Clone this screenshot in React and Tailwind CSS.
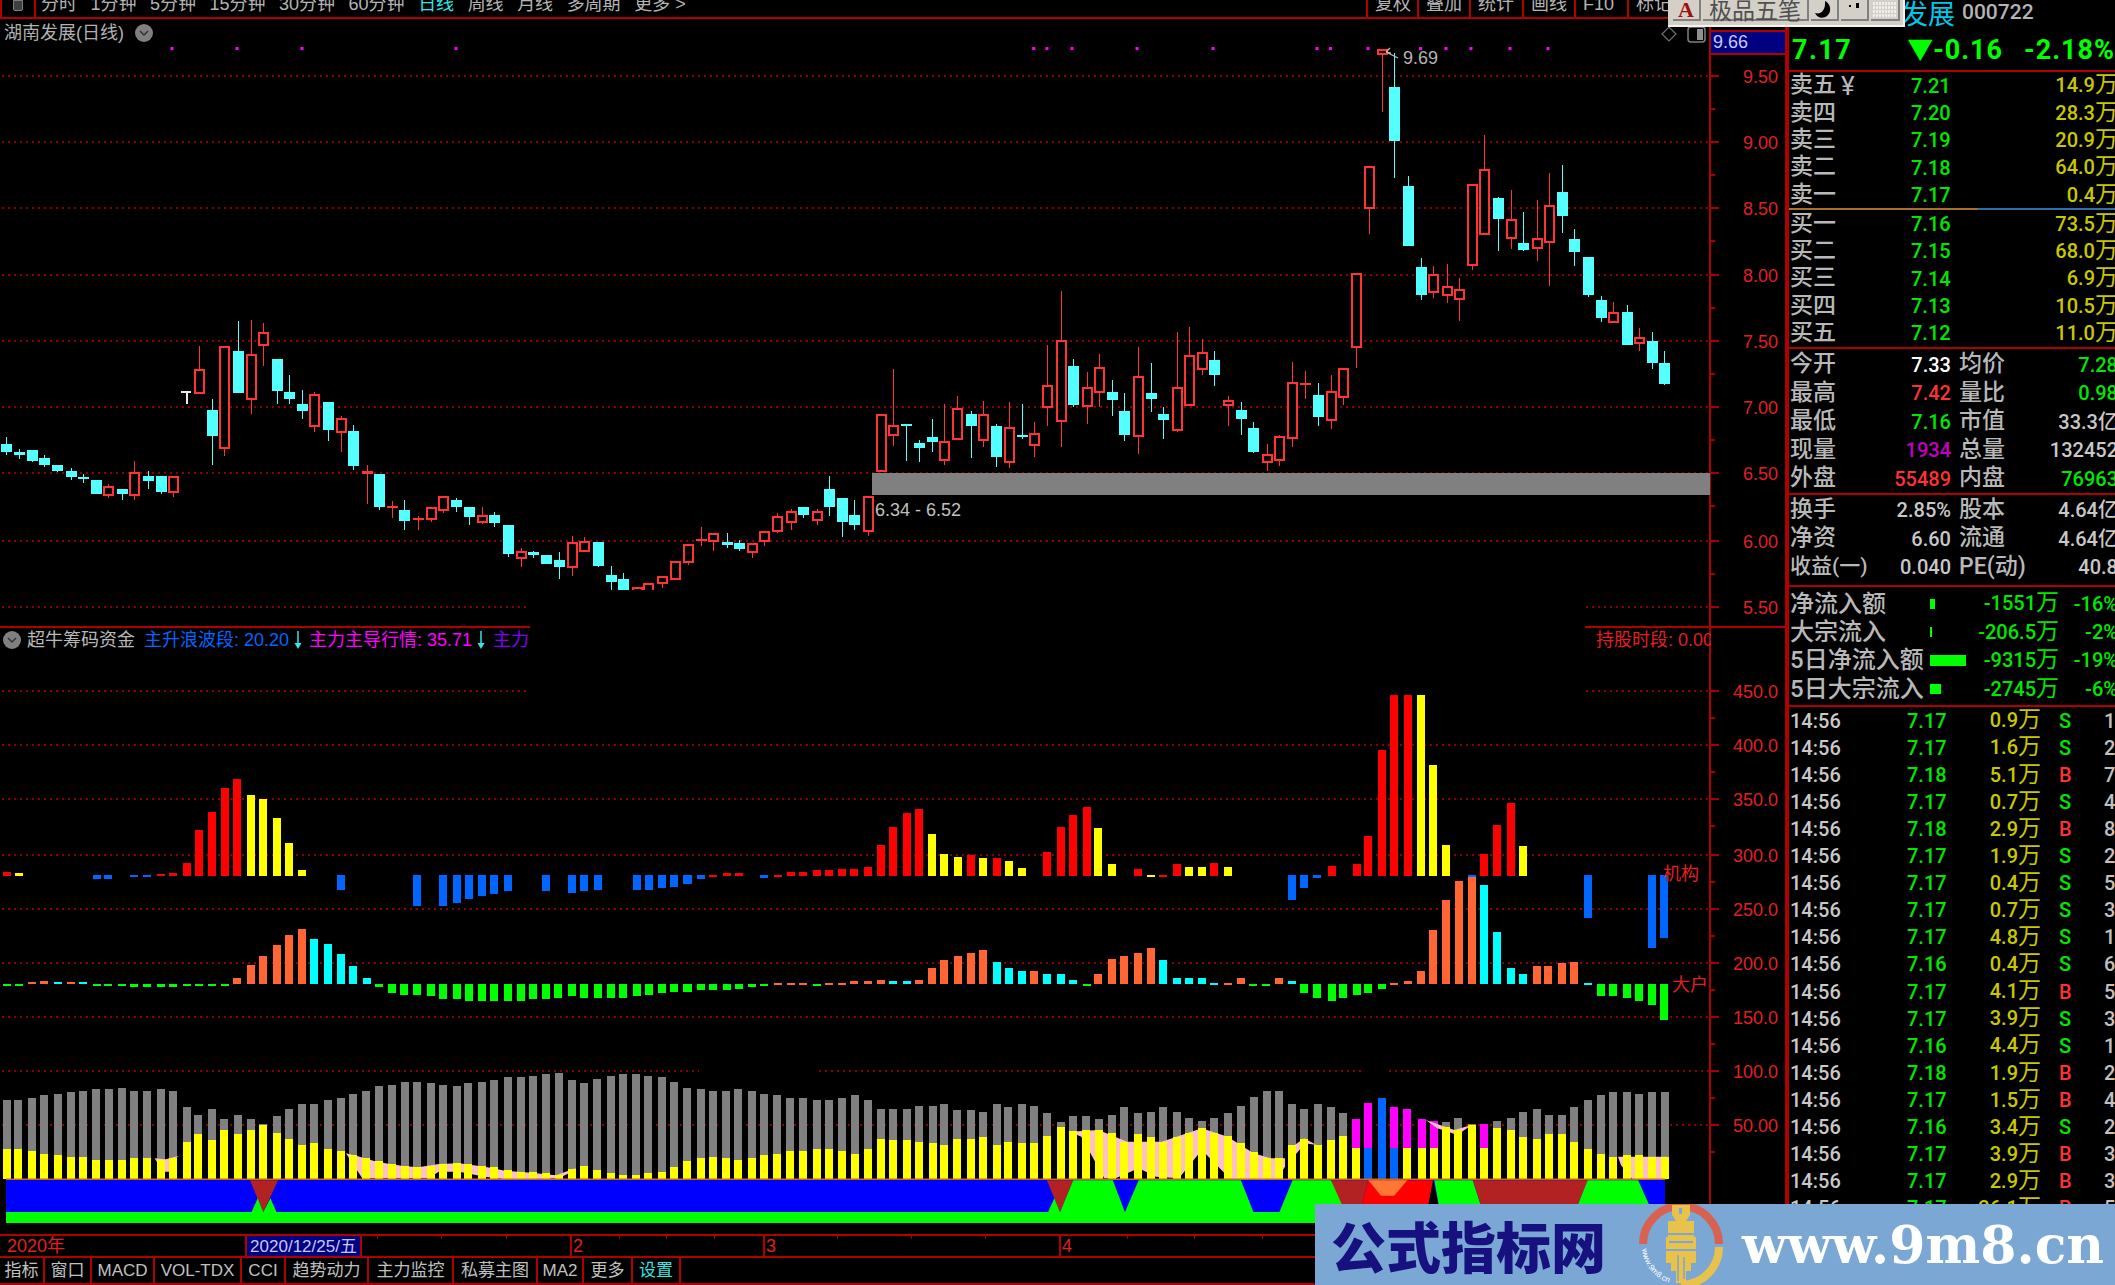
import React from "react";

const RED = "#ff3333", CY = "#54ffff";
const COL = { r: "#ff0000", y: "#ffff00", b: "#0066ff", o: "#ff6633", c: "#00ffff", g: "#00ff00", m: "#ff00ff", a: "#808080" };

const z9 = [[11,433,455,410,464,"c"],[33,456,464,446,478,"c"],[56,451,482,451,485,"c"],[77,473,495,464,500,"c"],[100,496,513,496,517,"c"],[124,514,531,505,540,"c"],[145,531,536,522,550,"c"],[168,541,581,541,581,"c"],[189,560,584,553,595,"r"],[213,568,581,568,599,"c"],[234,519,584,482,599,"r"],[257,528,544,514,568,"c"],[280,528,577,528,582,"c"],[302,532,575,532,590,"r"],[346,209,278,139,278,"r"],[370,329,409,297,495,"c"],[391,141,445,141,468,"r"],[414,154,279,64,279,"c"],[437,164,296,59,342,"r"],[458,100,134,68,198,"r"],[482,176,274,176,311,"c"],[503,275,297,225,311,"c"],[526,311,333,270,356,"c"],[547,285,377,275,397,"r"],[571,307,391,307,423,"c"],[594,357,395,347,455,"r"],[615,392,499,374,509,"c"],[639,514,522,496,612,"d"],[660,523,622,523,631,"c"],[683,617,625,603,653,"d"],[704,631,662,599,689,"c"],[728,653,661,648,689,"d"],[751,623,656,623,667,"r"],[772,591,629,591,640,"r"],[795,599,622,595,635,"c"],[817,622,652,622,676,"c"],[840,649,666,622,671,"r"],[861,644,670,635,680,"c"],[885,676,761,676,770,"c"],[908,757,774,743,801,"r"],[929,757,765,752,775,"c"],[952,766,793,766,793,"c"],[973,779,802,757,837,"c"],[997,730,800,708,829,"r"],[1018,726,752,712,757,"r"],[1041,725,797,725,802,"c"],[1065,824,847,797,869,"c"],[1086,838,870,820,870,"c"],[1109,865,872,865,870,"r"],[1129,853,872,848,870,"r"],[1154,830,850,830,864,"r"],[1175,785,836,785,836,"r"],[1198,735,787,735,796,"r"],[1222,716,724,681,739,"d"],[1242,703,724,698,752,"r"],[1266,725,734,698,743,"c"],[1287,730,748,721,752,"c"],[1310,731,755,731,775,"r"],[1331,695,724,695,739,"r"],[1354,650,692,640,698,"r"],[1378,636,665,627,689,"r"],[1399,622,644,622,653,"c"],[1423,636,661,627,676,"r"],[1444,568,622,527,649,"c"],[1467,595,667,595,712,"c"],[1488,644,676,599,690,"c"],[1512,591,693,591,708,"r"],[1535,344,513,344,513,"r"],[1556,379,404,207,437,"r"]];
const z10 = [[98,1181,1188,1181,1292,"c"],[120,1239,1255,1230,1297,"c"],[143,1221,1237,1167,1265,"c"],[164,1235,1290,1121,1305,"r"],[187,1136,1227,1099,1227,"r"],[211,1153,1188,1144,1283,"c"],[232,1154,1231,1112,1250,"r"],[255,1188,1282,1183,1310,"c"],[277,1195,1295,1117,1313,"r"],[299,1216,1220,1122,1228,"c"],[321,1213,1245,1175,1282,"r"],[344,1069,1132,946,1188,"r"],[367,934,1173,784,1250,"r"],[389,1009,1126,986,1130,"c"],[412,1073,1128,1027,1183,"r"],[434,1014,1087,972,1130,"r"],[457,1085,1111,1049,1157,"c"],[478,1144,1215,1090,1233,"c"],[501,1041,1219,950,1273,"r"],[524,1090,1107,1000,1147,"c"],[546,1153,1170,1131,1228,"c"],[569,1073,1200,905,1205,"r"],[590,978,1124,892,1124,"r"],[613,969,1016,928,1034,"r"],[634,991,1036,964,1067,"c"],[658,1114,1124,1098,1188,"r"],[681,1140,1166,1117,1215,"c"],[702,1194,1265,1175,1270,"c"],[726,1275,1295,1243,1322,"r"],[747,1221,1290,1216,1308,"r"],[770,1060,1223,996,1252,"r"],[792,1059,1066,1022,1107,"d"],[815,1094,1161,1058,1188,"c"],[838,1086,1169,1036,1197,"r"],[859,1018,1101,1013,1126,"r"],[882,731,952,731,1014,"r"],[904,411,533,411,612,"r"],[927,60,72,60,247,"r"],[948,172,332,70,445,"c"],[972,469,648,437,648,"c"],[995,712,796,685,809,"c"],[1016,736,785,707,805,"r"],[1040,771,795,703,819,"r"],[1061,780,808,744,873,"r"],[1083,465,705,465,719,"r"],[1105,420,611,316,611,"r"],[1129,505,566,500,662,"c"],[1152,569,624,481,656,"r"],[1173,640,661,545,664,"c"],[1196,627,655,509,692,"r"],[1217,528,637,428,769,"r"],[1241,487,557,405,608,"c"],[1262,626,666,598,707,"c"],[1285,680,796,680,800,"c"],[1309,811,864,797,877,"c"],[1330,848,877,815,877,"r"],[1353,847,945,824,945,"c"],[1375,925,939,895,962,"r"],[1397,932,999,905,1017,"c"],[1418,1000,1062,964,1066,"c"]];
const candles = [
  ...z9.map(([x, t, b, wt, wb, c]) => [x / 1.742, 300 + t / 3, 300 + b / 3, 300 + wt / 3, 300 + wb / 3, c]),
  ...z10.map(([x, t, b, wt, wb, c]) => [850 + x / 1.742, 30 + t / 3, 30 + b / 3, 30 + wt / 3, 30 + wb / 3, c]),
];

const t7 = [[15,"r",755],[42,"y",760],[217,"b",778],[243,"b",778],[300,"b",769],[330,"b",769],[361,"r",763],[388,"r",760],[418,"r",729],[445,"r",629],[475,"r",575],[503,"r",503],[532,"r",476],[562,"y",526],[589,"y",538],[620,"y",593],[647,"y",670],[677,"y",751],[764,"b",809],[935,"b",858],[992,"b",858],[1023,"b",849],[1050,"b",836],[1080,"b",827],[1107,"b",823],[1137,"b",814],[1224,"b",814],[1281,"b",818],[1308,"b",814],[1339,"b",809],[1426,"b",809],[1453,"b",809],[1483,"b",805],[1510,"b",800],[1540,"b",791]];
const t11 = [[63,"b",298],[99,"r",284],[140,"r",280],[176,"r",280],[252,"b",293],[293,"r",285],[333,"r",276],[370,"r",276],[410,"r",271],[446,"r",271],[487,"r",266],[522,"r",266],[563,"r",262],[603,"r",194],[639,"r",140],[680,"r",99],[716,"r",86],[757,"y",163],[792,"y",221],[833,"y",230],[874,"r",225],[909,"y",235],[950,"r",235],[986,"y",244]];
const t8 = [[43,"y",745],[93,"r",697],[120,"r",620],[143,"r",584],[170,"r",562],[193,"y",625],[220,"y",733],[270,"r",746],[296,"y",764],[320,"r",764],[346,"r",733],[370,"y",742],[396,"y",742],[420,"r",729],[446,"y",742],[572,"b",840],[596,"b",804],[622,"b",773],[650,"r",738],[699,"r",733],[722,"r",648],[749,"r",391],[772,"r",226],[799,"r",226],[825,"y",226],[849,"y",436],[875,"y",675],[925,"b",773],[949,"r",702],[975,"r",616],[1001,"r",549],[1025,"y",679],[1152,"b",894],[1278,"b",985],[1302,"b",953]];
const l7 = [[15,"g",1097],[42,"g",1094],[72,"o",1087],[99,"o",1084],[129,"c",1087],[159,"o",1087],[187,"c",1087],[217,"g",1097],[243,"g",1097],[273,"g",1097],[300,"g",1102],[330,"g",1102],[361,"g",1102],[388,"g",1102],[418,"g",1097],[445,"g",1097],[475,"g",1097],[503,"g",1097],[532,"o",1075],[562,"o",1034],[589,"o",1007],[620,"o",976],[647,"o",944],[677,"o",926],[704,"c",958],[734,"c",971],[764,"c",1003],[791,"c",1039],[821,"c",1075],[848,"g",1102],[878,"g",1120],[905,"g",1125],[935,"g",1125],[965,"g",1129],[992,"g",1138],[1023,"g",1138],[1050,"g",1142],[1080,"g",1142],[1107,"g",1142],[1137,"g",1142],[1167,"g",1142],[1194,"g",1138],[1224,"g",1138],[1251,"g",1133],[1281,"g",1129],[1308,"g",1133],[1339,"g",1133],[1368,"g",1133],[1396,"g",1133],[1426,"g",1129],[1453,"g",1125],[1483,"g",1120],[1510,"g",1115],[1540,"g",1115]];
const l11 = [[23,"g",635],[63,"g",631],[99,"g",631],[140,"g",631],[176,"g",627],[216,"g",622],[252,"g",617],[293,"o",608],[333,"o",608],[370,"o",608],[410,"g",617],[446,"o",608],[487,"o",608],[522,"o",604],[563,"o",604],[603,"o",599],[639,"c",604],[680,"c",604],[716,"o",599],[757,"o",563],[792,"o",541],[833,"o",527],[874,"o",518],[909,"o",509],[950,"c",545],[986,"c",563]];
const l8 = [[43,"c",1052],[67,"o",1052],[93,"c",1061],[120,"c",1061],[143,"c",1079],[170,"g",1097],[193,"o",1061],[220,"o",1016],[243,"o",1007],[270,"o",998],[296,"o",985],[320,"c",1021],[346,"c",1075],[370,"c",1075],[396,"c",1075],[420,"c",1089],[446,"o",1089],[472,"o",1075],[496,"g",1097],[522,"g",1097],[546,"o",1075],[572,"c",1084],[596,"g",1120],[622,"g",1133],[650,"g",1142],[672,"g",1133],[699,"g",1124],[722,"g",1120],[749,"g",1106],[772,"o",1089],[799,"o",1084],[825,"o",1052],[849,"o",931],[875,"o",841],[899,"o",782],[925,"o",772],[949,"c",796],[975,"c",935],[1001,"c",1043],[1025,"c",1061],[1052,"o",1039],[1075,"o",1039],[1101,"o",1030],[1125,"o",1025],[1152,"c",1089],[1178,"g",1129],[1202,"g",1129],[1228,"g",1133],[1252,"g",1142],[1278,"g",1156],[1302,"g",1200]];

const histoTop = [
  ...t7.map(([x, c, e]) => [x / 2.24, c, 620 + e / 3]),
  ...[[23, "b", 311]].map(([x, c, e]) => [680 + x / 3, c, 780 + e / 3]),
  ...t11.map(([x, c, e]) => [680 + x / 3, c, 780 + e / 3]),
  ...t8.map(([x, c, e]) => [1000 + x / 1.96, c, 620 + e / 3]),
];
const histoLow = [
  ...l7.map(([x, c, e]) => [x / 2.24, c, 620 + e / 3]),
  ...l11.map(([x, c, e]) => [680 + x / 3, c, 780 + e / 3]),
  ...l8.map(([x, c, e]) => [1000 + x / 1.96, c, 620 + e / 3]),
];

const v4 = [[13,150,298],[36,150,298],[63,145,302],[87,136,311],[113,132,316],[139,127,320],[163,123,320],[189,118,329],[213,118,329],[239,114,329],[263,123,325],[289,123,325],[316,118,329],[339,123,325],[366,172,276],[389,195,253],[416,177,271],[439,208,239],[466,195,253],[492,208,239],[516,222,226],[542,199,249],[566,177,266],[592,163,285],[615,163,280],[642,150,298],[668,145,302],[692,132,316],[718,123,325],[743,109,334],[768,105,343],[793,96,348],[818,96,352],[845,100,348],[868,105,343],[895,109,339],[918,100,343],[945,96,348],[968,91,352],[995,82,361],[1021,82,366],[1045,78,366],[1071,73,370],[1095,69,375],[1121,91,357],[1144,100,348],[1171,87,361],[1197,78,370],[1221,73,375],[1247,73,375],[1271,78,370],[1297,82,366],[1321,96,352],[1347,114,334],[1373,118,325],[1397,123,320],[1423,123,325],[1447,118,329],[1474,123,325],[1497,132,316],[1523,136,311],[1549,145,302]];
const v5 = [[5,145,302],[29,150,298],[50,150,298],[73,145,302],[95,136,311],[118,150,298],[141,177,266],[162,177,271],[186,177,271],[207,167,275],[231,167,280],[251,163,285],[274,181,266],[298,181,266],[319,185,262],[343,163,285],[363,172,275],[387,163,280],[408,167,280],[431,190,257],[455,217,230],[476,199,244],[498,199,240],[520,208,240],[544,195,248],[565,172,275],[588,190,253],[611,185,262],[632,172,275],[656,185,262],[677,204,248],[700,213,235],[722,204,248],[745,190,257],[768,167,280],[790,140,307],[813,123,325],[834,123,325],[857,163,285],[878,177,266],[902,163,285],[925,172,271],[946,190,257],[969,208,293,"m","y"],[990,159,293,"m","b"],[1014,145,293,"b","b"],[1035,172,293,"m","b"],[1058,177,293,"m","y"],[1083,208,293,"m","y"],[1104,213,293,"m","y"],[1126,217,230],[1147,204,240],[1171,222,226],[1192,222,293,"m","y"],[1215,213,235],[1238,204,239],[1260,185,262],[1283,177,266],[1304,195,253],[1328,195,253],[1349,172,275],[1372,150,298],[1395,136,311],[1416,127,320],[1440,127,316],[1462,132,316],[1485,127,320],[1506,127,320]];
const vols = [
  ...v4.map(([x, t, y, a = "a", l = "y"]) => [x / 1.96, 1050 + t / 3, 1050 + y / 3, a, l]),
  ...v5.map(([x, t, y, a = "a", l = "y"]) => [800 + x / 1.742, 1050 + t / 3, 1050 + y / 3, a, l]),
];

const p4 = (pts) => pts.map(([x, y]) => `${x / 1.96},${1050 + y / 3}`).join(" ");
const p5 = (pts) => pts.map(([x, y]) => `${800 + x / 1.742},${1050 + y / 3}`).join(" ");

const pink = [
  p4([[303,325],[325,328],[350,318],[345,325],[335,365],[320,365]]),
  p4([[678,310],[700,318],[740,336],[790,348],[820,352],[860,342],[900,340],[950,350],[990,362],[1040,368],[1090,376],[1130,353],[1115,370],[1095,385],[1040,388],[990,388],[950,380],[900,365],[860,365],[840,385],[710,385]]),
  p5([[470,245],[520,240],[570,275],[630,275],[700,235],[745,260],[790,310],[820,325],[845,325],[845,350],[830,388],[750,388],[700,300],[660,385],[620,380],[590,355],[550,385],[530,385],[490,260]]),
  p5([[850,300],[878,265],[900,285],[880,280],[860,320]]),
  p5([[1090,210],[1140,240],[1170,225],[1145,255],[1120,240],[1110,235]]),
  p5([[1425,320],[1510,320],[1510,388],[1450,388],[1430,345]]),
];

const bands = [
  ["#b22222", p4([[490,391],[545,391],[516,487]])],
  ["#00ff00", p4([[493,487],[505,445],[516,487]])],
  ["#00ff00", p4([[516,487],[530,445],[542,487]])],
  ["#b22222", p5([[430,391],[476,391],[453,487]])],
  ["#00ff00", p5([[432,487],[443,445],[453,487]])],
  ["#00ff00", p5([[476,391],[545,391],[566,487],[453,487]])],
  ["#00ff00", p5([[590,391],[768,391],[790,487],[566,487]])],
  ["#00ff00", p5([[858,391],[925,391],[960,487],[835,487]])],
  ["#b22222", p5([[925,391],[990,391],[975,487],[950,487]])],
  ["#ff0000", p5([[990,391],[1103,391],[1092,487],[975,487]])],
  ["#ff7733", p5([[990,391],[1058,391],[1035,437],[1012,437]])],
  ["#000000", p5([[1103,391],[1115,487],[1092,487]])],
  ["#00ff00", p5([[1105,391],[1172,391],[1190,487],[1115,487]])],
  ["#b22222", p5([[1172,391],[1372,391],[1350,487],[1190,487]])],
  ["#00ff00", p5([[1372,391],[1460,391],[1485,487],[1350,487]])],
];

const dots = [172, 237, 302, 456, 1033.7, 1047, 1072, 1137, 1213, 1317, 1330.5, 1368, 1420.6, 1446, 1471, 1510, 1548];
const priceY = [76, 142, 208, 275, 341, 407, 473, 541, 607];
const priceL = ["9.50", "9.00", "8.50", "8.00", "7.50", "7.00", "6.50", "6.00", "5.50"];
const indY = [691, 745, 799, 855, 909, 963, 1017, 1071, 1125];
const indL = ["450.0", "400.0", "350.0", "300.0", "250.0", "200.0", "150.0", "100.0", "50.00"];

const Grid = ({ y, segs = [[0, 1711]] }) => (
  <g>
    {segs.map(([a, b], i) => (
      <line key={i} x1={a + 2} x2={b} y1={y} y2={y} stroke="#8c0000" strokeWidth="2" strokeDasharray="2 4" shapeRendering="crispEdges" />
    ))}
  </g>
);

const Bar = ({ x, a, b, c }) => {
  const top = Math.min(a, b);
  const h = Math.max(2, Math.abs(a - b));
  return <rect x={Math.round(x - 4)} y={top} width="8" height={h} fill={COL[c]} shapeRendering="crispEdges" />;
};

function PriceChart() {
  return (
    <svg viewBox="0 19 1711 607" className="block w-[1711px] h-[607px]">
      {priceY.map((y) => <Grid key={y} y={y} />)}
      {dots.map((x) => <rect key={x} x={x - 1.5} y="47" width="3" height="3" fill="#ff00ff" />)}
      <rect x="872" y="473" width="838" height="22" fill="#808080" />
      {candles.map(([x, t, b, wt, wb, c], i) => {
        const col = c === "c" ? CY : RED;
        const rx = Math.round(x - 5);
        const wx = Math.round(x);
        return (
          <g key={i} shapeRendering="crispEdges">
            <line x1={wx + 0.5} x2={wx + 0.5} y1={wt} y2={wb} stroke={col} strokeWidth="1" />
            {c === "r" ? (
              <rect x={rx + 1} y={t} width="9" height={Math.max(b - t, 2)} fill="#000" stroke={col} strokeWidth="2" />
            ) : (
              <rect x={rx} y={t} width="11" height={Math.max(b - t, 2)} fill={col} />
            )}
          </g>
        );
      })}
      <g shapeRendering="crispEdges">
        <rect x="181" y="391" width="10" height="2" fill="#e8e8e8" />
        <rect x="186" y="391" width="1.5" height="13" fill="#e8e8e8" />
      </g>
      <rect x="530" y="590" width="1055" height="36" fill="#000" />
      <path d="M1398 58 L1386 52 M1386 52 l4 -4 M1386 52 l5 1" stroke="#c0c0c0" strokeWidth="1.2" fill="none" />
      <text x="1403" y="64" fontSize="18" fill="#b4b4b4">9.69</text>
      <text x="875" y="516" fontSize="18" fill="#c0c0c0">6.34 - 6.52</text>
      <path d="M1669 27 L1676 34 L1669 41 L1662 34 Z" fill="none" stroke="#707070" strokeWidth="1.2" />
      <rect x="1688" y="27" width="17" height="15" rx="3" fill="none" stroke="#808080" strokeWidth="1.5" />
      <rect x="1697" y="29" width="6" height="11" fill="#909090" />
    </svg>
  );
}

function IndicatorChart() {
  return (
    <svg viewBox="0 626 1711 608" className="block w-[1711px] h-[608px]">
      {indY.map((y) => (
        <Grid key={y} y={y} segs={y === 1071 ? [[0, 699], [817, 1365], [1387, 1711]] : [[0, 1711]]} />
      ))}
      {histoTop.map(([x, c, e], i) => <Bar key={i} x={x} a={c === "b" ? 875 : 876} b={e} c={c} />)}
      {histoLow.map(([x, c, e], i) => <Bar key={i} x={x} a={984} b={e} c={c} />)}
      {vols.map(([x, t, y, a], i) => <Bar key={i} x={x} a={1179} b={t} c={a} />)}
      {pink.map((p, i) => <polygon key={i} points={p} fill="#ffc0cb" />)}
      {vols.map(([x, t, y, a, l], i) => <Bar key={i} x={x} a={1179} b={y} c={l} />)}
      <rect x="6" y="1180" width="1659" height="32" fill="#0000ff" />
      {bands.map(([c, p], i) => <polygon key={i} points={p} fill={c} />)}
      <rect x="6" y="1178.5" width="1659" height="1.5" fill="#c86a1e" />
      <rect x="6" y="1212" width="1659" height="11" fill="#00ff00" />
      <rect x="530" y="626" width="1055" height="69" fill="#000" />
      <rect x="0" y="626" width="530" height="2" fill="#b00000" />
      <rect x="1585" y="626" width="126" height="2" fill="#b00000" />
      <text x="1663" y="880" fontSize="18" fill="#e02020">机构</text>
      <text x="1672" y="991" fontSize="18" fill="#e02020">大户</text>
    </svg>
  );
}

const Axis = ({ ys, labels, height, vb, minor }) => (
  <svg viewBox={`0 ${vb} 76 ${height}`} className="block w-[76px]" style={{ height }}>
    {ys.map((y, i) => (
      <g key={y}>
        <rect x="0" y={y - 1} width="8" height="2" fill="#a80000" />
        <text x="67" y={y + 7} textAnchor="end" fontSize="18" fill="#e02020">{labels[i]}</text>
        {minor && <rect x="0" y={y + minor - 1} width="4" height="2" fill="#a80000" />}
      </g>
    ))}
  </svg>
);

const menu = ["分时", "1分钟", "5分钟", "15分钟", "30分钟", "60分钟", "日线", "周线", "月线", "多周期", "更多 >"];
const rightMenu = [["复权", 51], ["叠加", 52], ["统计", 53], ["画线", 52], ["F10", 53], ["标记", 160]];

function TopBar() {
  return (
    <div className="flex h-[19px] border-b-2 border-[#b00000] text-[18px] leading-[18px] text-[#b4b4b4] overflow-hidden">
      <div className="w-[36px] h-full border-r-2 border-l-2 border-[#b00000] flex justify-center">
        <div className="w-[10px] h-[11px] -ml-[1px] border border-[#808080] bg-[#404040] rounded-b-[2px]" />
      </div>
      <div className="flex gap-[13.5px] ml-[5px] -mt-[5px] items-start">
        {menu.map((m) => (
          <span key={m} className={m === "日线" ? "text-[#33e6e6] whitespace-nowrap" : "whitespace-nowrap"}>{m}</span>
        ))}
      </div>
      <div className="flex ml-auto">
        {rightMenu.map(([m, w]) => (
          <div key={m} className="border-l-2 border-[#b00000] flex pl-[7px] h-full" style={{ width: w }}>
            <span className="-mt-[5px]">{m}</span>
          </div>
        ))}
      </div>
    </div>
  );
}

const DateRow = () => (
  <div className="relative flex h-[24px] border-t-2 border-b-2 border-[#b00000] text-[18px] leading-[21px] text-[#e02020]">
    <div className="w-[245px] pl-[7px]">2020年</div>
    <div className="w-[117px] bg-[#000080] border-x-2 border-[#b00000] text-[#c8c8ff] text-center whitespace-nowrap text-[17px]">2020/12/25/五</div>
    <div className="w-[208px]" />
    <div className="w-[193px] border-l-2 border-[#b00000] pl-[1px]">2</div>
    <div className="w-[296px] border-l-2 border-[#b00000] pl-[1px]">3</div>
    <div className="flex-1 border-l-2 border-[#b00000] pl-[1px]">4</div>
    <svg className="absolute left-0 top-0 w-[1500px] h-[4px]" viewBox="0 0 1500 4">
      {[377, 441, 506, 619, 666, 714, 837, 911, 985, 1127, 1194, 1262].map((x) => (
        <rect key={x} x={x} y="0" width="1" height="3" fill="#a80000" />
      ))}
    </svg>
  </div>
);

const tabs = [["指标", 45], ["窗口", 47], ["MACD", 63], ["VOL-TDX", 87], ["CCI", 44], ["趋势动力", 83], ["主力监控", 85], ["私募主图", 84], ["MA2", 46], ["更多", 49], ["设置", 48]];

const Tabs = () => (
  <div className="flex h-[27px] border-b-2 border-[#b00000] text-[17px] text-[#c0c0c0]">
    {tabs.map(([t, w]) => (
      <div key={t} className={`border-r-2 border-[#b00000] flex items-center justify-center pt-[1px] ${t === "设置" ? "text-[#33e6e6]" : ""}`} style={{ width: w }}>
        <span className="whitespace-nowrap">{t}</span>
      </div>
    ))}
  </div>
);

const GREEN = "text-[#00e800]", YEL = "text-[#c8c800]";
const Vol = ({ v, className = "" }) => (
  <span className={`${YEL} whitespace-nowrap ${className}`}>
    {v}<span className="text-[23px] font-normal">万</span>
  </span>
);

const sell = [["卖五", "7.21", "14.9"], ["卖四", "7.20", "28.3"], ["卖三", "7.19", "20.9"], ["卖二", "7.18", "64.0"], ["卖一", "7.17", "0.4"]];
const buy = [["买一", "7.16", "73.5"], ["买二", "7.15", "68.0"], ["买三", "7.14", "6.9"], ["买四", "7.13", "10.5"], ["买五", "7.12", "11.0"]];

const BookRow = ({ l, p, v, extra }) => (
  <div className="flex items-center h-[27.3px] pl-[1px]">
    <span className="w-[121px] text-[23px] text-[#b8b8b8] whitespace-nowrap flex items-center">
      {l}{extra && <span className="text-[26px] font-normal leading-none ml-[5px]">¥</span>}
    </span>
    <span className={`text-[20px] ${GREEN}`}>{p}</span>
    <div className="flex-1 flex justify-end -mr-[3px] text-[20px]"><Vol v={v} /></div>
  </div>
);

const S = "text-[#c8c8c8]";
const stats = [
  ["今开", "7.33", "text-white", "均价", "7.28", GREEN],
  ["最高", "7.42", "text-[#ff3232]", "量比", "0.98", GREEN],
  ["最低", "7.16", GREEN, "市值", "33.3亿", S],
  ["现量", "1934", "text-[#c000c0]", "总量", "132452", S],
  ["外盘", "55489", "text-[#ff3232]", "内盘", "76963", GREEN],
];
const stats2 = [
  ["换手", "2.85%", S, "股本", "4.64亿", S],
  ["净资", "6.60", S, "流通", "4.64亿", S],
  ["收益(一)", "0.040", S, "PE(动)", "40.8", S],
];

const StatRow = ({ r: [a, b, bc, c, d, dc] }) => (
  <div className="flex items-center h-[28.5px] pl-[1px]">
    <span className="w-[161px] flex items-center justify-between whitespace-nowrap text-[23px] text-[#b8b8b8]">
      <span className={a.length > 2 ? "text-[21px]" : ""}>{a}</span>
      <span className={`text-[20px] ${bc}`}>{b}</span>
    </span>
    <span className={`ml-[8px] text-[23px] text-[#b8b8b8] whitespace-nowrap ${c.length > 2 ? "text-[21px]" : ""}`}>{c}</span>
    <span className={`flex-1 text-right text-[20px] -mr-[3px] whitespace-nowrap ${dc}`}>{d}</span>
  </div>
);

const flows = [["净流入额", 5, 10, "-1551", "-16%"], ["大宗流入", 2, 10, "-206.5", "-2%"], ["5日净流入额", 36, 11, "-9315", "-19%"], ["5日大宗流入", 11, 10, "-2745", "-6%"]];

const FlowRow = ({ f: [l, w, h, v, p] }) => (
  <div className="flex items-center h-[28.4px] pl-[1px]">
    <span className="w-[140px] text-[24px] text-[#b8b8b8] whitespace-nowrap">{l}</span>
    <span className="w-[40px] flex items-center">
      <span className="block bg-[#00ff00]" style={{ width: w, height: h }} />
    </span>
    <span className={`w-[89px] text-right text-[20px] whitespace-nowrap ${GREEN}`}>
      {v}<span className="text-[23px] font-normal">万</span>
    </span>
    <span className={`flex-1 text-right text-[20px] -mr-[3px] whitespace-nowrap ${GREEN}`}>{p}</span>
  </div>
);

const ticks = [["7.17","0.9","S","1"],["7.17","1.6","S","2"],["7.18","5.1","B","7"],["7.17","0.7","S","4"],["7.18","2.9","B","8"],["7.17","1.9","S","2"],["7.17","0.4","S","5"],["7.17","0.7","S","3"],["7.17","4.8","S","11"],["7.16","0.4","S","6"],["7.17","4.1","B","5"],["7.17","3.9","S","3"],["7.16","4.4","S","1"],["7.18","1.9","B","2"],["7.17","1.5","B","4"],["7.16","3.4","S","2"],["7.17","3.9","B","3"],["7.17","2.9","B","3"],["7.17","26.1","B","5"]];

const TickRow = ({ t: [p, v, s, n] }) => (
  <div className="flex items-center h-[27.1px] pl-[1px] text-[20px]">
    <span className="w-[117px] shrink-0 text-[#c8c8c8]">14:56</span>
    <span className={`w-[70px] shrink-0 ${GREEN}`}>{p}</span>
    <span className="w-[64px] shrink-0 text-right"><Vol v={v} /></span>
    <span className={`w-[63px] shrink-0 pl-[18px] ${s === "S" ? "text-[#00e800]" : "text-[#ff3232]"}`}>{s}</span>
    <span className="shrink-0 text-[#c0c0c0] whitespace-nowrap">{n}</span>
  </div>
);

function RightPanel() {
  return (
    <div className="w-[328px] flex flex-col [font-family:Roboto,'Noto_Sans_CJK_SC',sans-serif] font-medium overflow-hidden">
      <div className="h-[30px] flex items-start pl-[48px]">
        <span className="w-[118px] -mt-[7px] text-right text-[27px] font-normal text-[#00c8e8] whitespace-nowrap [font-family:'Noto_Sans_CJK_SC',sans-serif]">湖南发展</span>
        <span className="ml-[7px] -mt-[3px] text-[21px] text-[#b4b4b4]">000722</span>
      </div>
      <div className="h-[42px] flex items-center border-b-2 border-[#b00000] text-[#00ff00] text-[27px] font-bold pl-[3px] whitespace-nowrap">
        <span className="w-[122px] tracking-[1.5px]">7.17</span>
        <span className="text-[26px]">▼</span>
        <span className="tracking-[1px]">-0.16</span>
        <span className="ml-[21px] tracking-[1px]">-2.18%</span>
      </div>
      <div>{sell.map((r, i) => <BookRow key={i} l={r[0]} p={r[1]} v={r[2]} extra={i === 0} />)}</div>
      <div className="flex h-[2px]">
        <div className="w-[189px] bg-[#a8702a]" />
        <div className="flex-1 bg-[#2f6ea8]" />
      </div>
      <div className="border-b-2 border-[#b00000]">{buy.map((r, i) => <BookRow key={i} l={r[0]} p={r[1]} v={r[2]} />)}</div>
      <div className="border-b-2 border-[#b00000] pt-[1.5px]">{stats.map((r) => <StatRow key={r[0]} r={r} />)}</div>
      <div className="border-b-2 border-[#b00000] pt-[1px] pb-[4px]">{stats2.map((r) => <StatRow key={r[0]} r={r} />)}</div>
      <div className="border-b-2 border-[#b00000] pt-[2px] pb-[2px]">{flows.map((f) => <FlowRow key={f[0]} f={f} />)}</div>
      <div>{ticks.map((t, i) => <TickRow key={i} t={t} />)}</div>
    </div>
  );
}

const Logo = () => (
  <svg viewBox="0 0 84 84" className="w-[84px] h-[84px]">
    <path d="M4 41 A38 38 0 0 1 80 41" fill="none" stroke="#d9614f" strokeWidth="8" />
    <path d="M80 44 A38 38 0 0 1 42 82" fill="none" stroke="#e8c24a" strokeWidth="8" />
    <path id="wmArc" d="M3 46 A39 39 0 0 0 36 81" fill="none" />
    <text fontSize="8" fill="#ffffff"><textPath href="#wmArc">www.9m8.cn</textPath></text>
    <path d="M33 2 H51 V12 L47 18 H55 V34 H57 V60 H52 V68 H47 V80 H37 V68 H32 V60 H27 V34 H29 V18 H37 L33 12 Z" fill="#e8c24a" />
    <rect x="40" y="5" width="3" height="6" fill="#7aa7d4" />
    <rect x="29" y="30" width="26" height="2" fill="#7aa7d4" />
    <rect x="27" y="46" width="30" height="2" fill="#7aa7d4" />
    <rect x="30" y="38" width="24" height="2" fill="#7aa7d4" />
    <path d="M39 52 V78 M45 54 V76" stroke="#7aa7d4" strokeWidth="1.5" />
  </svg>
);

const Ime = () => (
  <div className="absolute left-[1668px] top-0 w-[237px] h-[27px] bg-[#d4d0c8] border-r-2 border-b-2 border-[#f4f2ec] flex items-start pl-[5px] pt-0 gap-[2px] overflow-hidden">
    <div className="w-[28px] h-[21px] bg-[#d4d0c8] border-r-2 border-b-2 border-[#808080] flex items-center justify-center text-[#a01010] font-bold text-[22px] [font-family:'Liberation_Serif',serif]">A</div>
    <div className="w-[106px] h-[21px] border-r-2 border-b-2 border-[#808080] text-[23px] leading-[19px] text-[#505050] whitespace-nowrap text-center [font-family:'Noto_Sans_CJK_SC',sans-serif]">极品五笔</div>
    <div className="w-[28px] h-[21px] border-r-2 border-b-2 border-[#808080] flex items-center justify-center">
      <svg viewBox="0 0 20 18" className="w-[20px] h-[18px]"><path d="M11 0 C17 3 18 11 13 15 C9 18 3 17 1 12 C6 14 12 10 11 0 Z" fill="#000" /></svg>
    </div>
    <div className="w-[28px] h-[21px] border-r-2 border-b-2 border-[#808080] flex items-start justify-center gap-[5px] pt-[3px]">
      <span className="block w-[2px] h-[2px] mt-[2px] bg-black" />
      <span className="block w-[3px] h-[5px] bg-black" />
    </div>
    <div className="w-[29px] h-[21px] border-r-2 border-b-2 border-[#808080] flex items-center justify-center">
      <svg viewBox="0 0 24 16" className="w-[24px] h-[16px]">
        {[1.5, 5.5, 9.5, 13.5].map((y) => (
          <line key={y} x1="0" x2="24" y1={y} y2={y} stroke="#f2f2f2" strokeWidth="2.5" strokeDasharray="2 1" />
        ))}
      </svg>
    </div>
  </div>
);

const Watermark = () => (
  <div className="absolute left-[1315px] top-[1204px] w-[800px] h-[81px] bg-[#7aa7d4] flex items-center overflow-hidden">
    <span className="ml-[16px] w-[300px] text-[55px] leading-none font-black text-[#17107f] whitespace-nowrap [font-family:'Noto_Sans_CJK_SC',sans-serif]">公式指标网</span>
    <div className="ml-[8px] w-[84px]"><Logo /></div>
    <span className="ml-[19px] text-[52px] leading-none font-bold text-white whitespace-nowrap [font-family:'DejaVu_Serif',serif]">www.9m8.cn</span>
  </div>
);

const Chevron = () => (
  <span className="w-[18px] h-[18px] rounded-full bg-[#808080] flex items-center justify-center">
    <svg viewBox="0 0 10 10" className="w-[10px] h-[10px]"><path d="M1 3 L5 7 L9 3" stroke="#333" strokeWidth="1.5" fill="none" /></svg>
  </span>
);

const DownArrow = () => (
  <svg viewBox="0 0 8 19" className="w-[8px] h-[19px] ml-[5px]">
    <path d="M4 0 V14" stroke="#33e6e6" strokeWidth="1.5" />
    <path d="M0.5 12 H7.5 L4 18 Z" fill="#33e6e6" />
  </svg>
);

export default function App() {
  return (
    <div className="relative flex w-[2115px] h-[1285px] bg-black overflow-hidden [font-family:'Liberation_Sans','Noto_Sans_CJK_SC',sans-serif]">
      <div className="w-[1787px] shrink-0 flex flex-col">
        <TopBar />
        <div className="flex border-r-2 border-[#b00000]">
          <div className="w-[1711px] relative">
            <PriceChart />
            <div className="absolute left-[4px] top-[5px] flex items-center text-[18px] leading-[18px] text-[#b0b0b0] whitespace-nowrap">
              湖南发展(日线)
              <span className="ml-[11px]"><Chevron /></span>
            </div>
            <IndicatorChart />
            <div className="absolute left-[3px] top-[611px] flex items-center text-[18px] leading-[20px] whitespace-nowrap h-[20px]">
              <Chevron />
              <span className="ml-[6px] text-[#b8b8b8]">超牛筹码资金</span>
              <span className="ml-[9px] text-[#0066ff]">主升浪波段: 20.20</span>
              <DownArrow />
              <span className="ml-[7px] text-[#ff00ff]">主力主导行情: 35.71</span>
              <DownArrow />
              <span className="ml-[8px] text-[#8000ff]">主力</span>
            </div>
            <div className="absolute left-[1596px] top-[611px] w-[115px] h-[20px] overflow-hidden text-[18px] leading-[20px] text-[#e02020] whitespace-nowrap">持股时段: 0.00</div>
          </div>
          <div className="w-[76px] border-l-2 border-[#b00000] -ml-[2px] flex flex-col">
            <div className="relative h-[607px]">
              <Axis ys={priceY} labels={priceL} height={607} vb={19} minor={33} />
              <div className="absolute left-0 right-0 top-[11px] h-[25px] bg-[#000080] border-y-2 border-[#b00000] text-[18px] leading-[21px] text-[#c8c8ff] pl-[2px]">9.66</div>
            </div>
            <div className="border-t-2 border-[#b00000] h-[608px]">
              <Axis ys={indY} labels={indL} height={606} vb={628} minor={27} />
            </div>
          </div>
        </div>
        <DateRow />
        <Tabs />
      </div>
      <div className="w-[2px] bg-[#b00000] shrink-0" />
      <RightPanel />
      <Ime />
      <Watermark />
    </div>
  );
}
